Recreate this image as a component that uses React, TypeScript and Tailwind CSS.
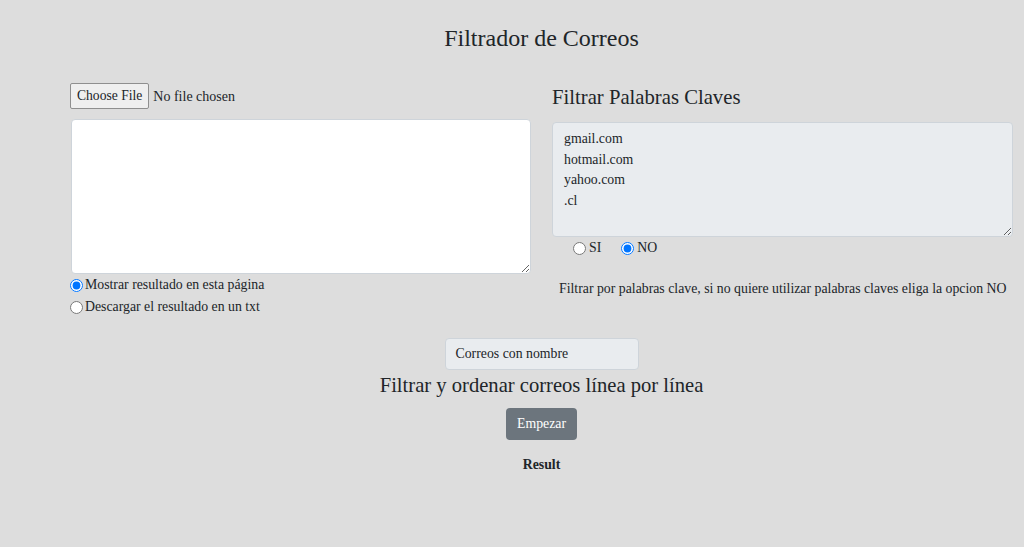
export default function App() {
  return (
    <div className="min-h-[547px] w-full bg-[#dddddd] text-[#212529] font-['Liberation_Serif','Times_New_Roman',serif]">
      <h1 className="pt-[22px] pl-[59px] text-center text-[24px] leading-[32px]">Filtrador de Correos</h1>

      <div className="mt-[29px] grid grid-cols-[461px_461px] gap-x-[21px] pl-[70px]">
        {/* left column */}
        <div>
          <div className="flex items-center h-[26px] text-[14px]">
            <span className="h-[26px] px-[6px] flex items-center border border-[#8f8f8f] rounded-[2px] bg-[#efefef] text-[13.6px]">
              Choose File
            </span>
            <span className="ml-[4px]">No file chosen</span>
          </div>
          <textarea
            className="mt-[10px] block w-[460px] h-[155px] ml-px bg-white border border-[#ced4da] rounded-[4px] outline-none resize-y"
          />
          <label className="mt-[2px] flex items-center h-[19px] text-[13.8px]">
            <input type="radio" name="out" defaultChecked className="m-0 mr-[2px] w-[13px] h-[13px]" />
            Mostrar resultado en esta página
          </label>
          <label className="mt-[3px] flex items-center h-[19px] text-[13.8px]">
            <input type="radio" name="out" className="m-0 mr-[2px] w-[13px] h-[13px]" />
            Descargar el resultado en un txt
          </label>
        </div>

        {/* right column */}
        <div>
          <h2 className="mt-px text-[20.7px] leading-[26px]">Filtrar Palabras Claves</h2>
          <textarea
            defaultValue={'gmail.com\nhotmail.com\nyahoo.com\n.cl'}
            className="mt-[12px] block w-[461px] h-[115px] bg-[#e9ecef] border border-[#ced4da] rounded-[4px] px-[11px] pt-[6px] text-[13.8px] leading-[20.5px] outline-none resize-y font-['Liberation_Serif','Times_New_Roman',serif]"
          />
          <div className="mt-[2px] flex items-center h-[18px] pl-[21px] text-[13.8px]">
            <label className="flex items-center">
              <input type="radio" name="kw" className="m-0 mr-[3px] w-[13px] h-[13px]" />
              SI
            </label>
            <label className="ml-[20px] flex items-center">
              <input type="radio" name="kw" defaultChecked className="m-0 mr-[3px] w-[13px] h-[13px]" />
              NO
            </label>
          </div>
          <p className="mt-[22px] pl-[7px] text-[13.8px]">
            Filtrar por palabras clave, si no quiere utilizar palabras claves eliga la opcion NO
          </p>
        </div>
      </div>

      <div className="mt-[21px] pl-[59px] flex flex-col items-center">
        <div className="w-[194px] h-[32px] flex items-center px-[10px] bg-[#e9ecef] border border-[#ced4da] rounded-[4px] text-[13.8px]">
          Correos con nombre
        </div>
        <p className="mt-[2px] text-[20.6px] leading-[26px]">Filtrar y ordenar correos línea por línea</p>
        <button className="mt-[10px] h-[32px] w-[71px] bg-[#6c757d] text-white text-[13.8px] rounded-[4px]">
          Empezar
        </button>
        <p className="mt-[15px] text-[13.8px] font-bold">Result</p>
      </div>
    </div>
  );
}
